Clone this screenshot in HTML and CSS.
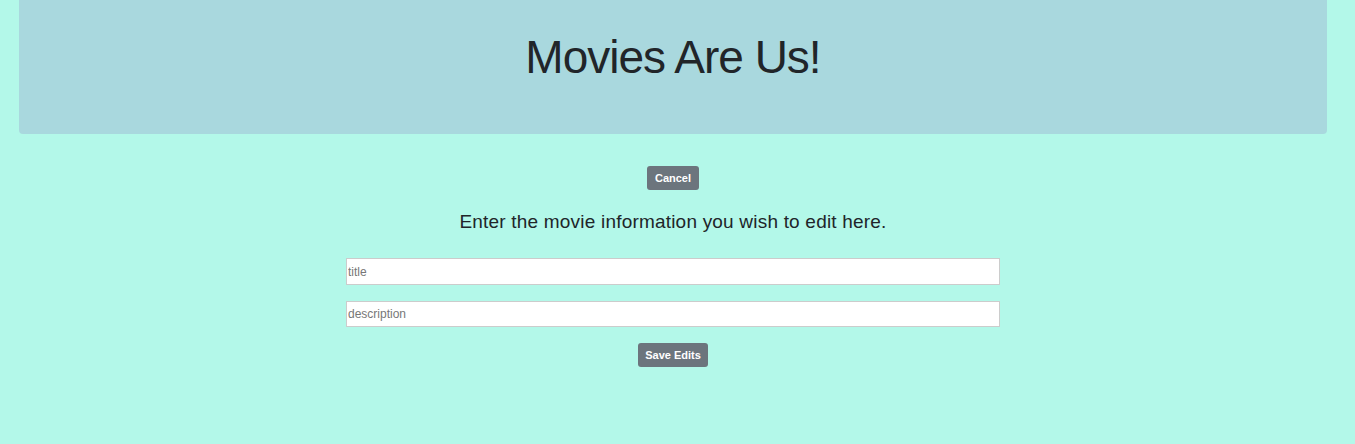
FILE: index.html
```html
<!DOCTYPE html>
<html lang="en">
<head>
<meta charset="utf-8">
<title>Movies Are Us!</title>
<link rel="stylesheet" href="styles.css">
</head>
<body>
<div class="page">
  <header class="banner">
    <h1 class="banner-title">Movies Are Us!</h1>
  </header>
  <main class="editor">
    <button class="btn" type="button">Cancel</button>
    <h2 class="editor-heading">Enter the movie information you wish to edit here.</h2>
    <form class="editor-form">
      <input class="field" type="text" placeholder="title">
      <input class="field" type="text" placeholder="description">
      <button class="btn btn-save" type="button">Save Edits</button>
    </form>
  </main>
</div>
</body>
</html>
```
FILE: styles.css
```css
html, body {
  margin: 0;
  padding: 0;
  background: #b3f8e9;
  height: 100%;
}
body {
  font-family: "Liberation Sans", Arial, sans-serif;
  color: #212529;
}
.page {
  padding: 0 28px 0 19px;
}
.banner {
  background: #a9d8de;
  height: 134px;
  border-radius: 0 0 4px 4px;
  display: flex;
  justify-content: center;
  align-items: flex-start;
}
.banner-title {
  margin: 26px 0 0;
  font-size: 46px;
  font-weight: 400;
  letter-spacing: -1px;
  line-height: 62px;
}
.editor {
  display: flex;
  flex-direction: column;
  align-items: center;
  padding-top: 32px;
}
.btn {
  font-family: "Liberation Sans", Arial, sans-serif;
  background: #6c757d;
  color: #fff;
  border: none;
  border-radius: 3px;
  font-size: 11px;
  font-weight: 700;
  height: 24px;
  padding: 0 8px;
  cursor: pointer;
}
.btn-save {
  padding: 0 7px;
}
.editor-heading {
  margin: 20px 0 24px;
  font-size: 19px;
  font-weight: 400;
  letter-spacing: 0.2px;
  line-height: 24px;
}
.editor-form {
  display: flex;
  flex-direction: column;
  align-items: center;
  gap: 16px;
}
.field {
  box-sizing: border-box;
  width: 654px;
  height: 27px;
  border: 1px solid #cccccc;
  background: #fff;
  padding: 0 1px;
  font-family: "Liberation Sans", Arial, sans-serif;
  font-size: 12px;
  margin: 0;
}
.field::placeholder {
  color: #777777;
}
.field + .field {
  height: 26px;
}
```
